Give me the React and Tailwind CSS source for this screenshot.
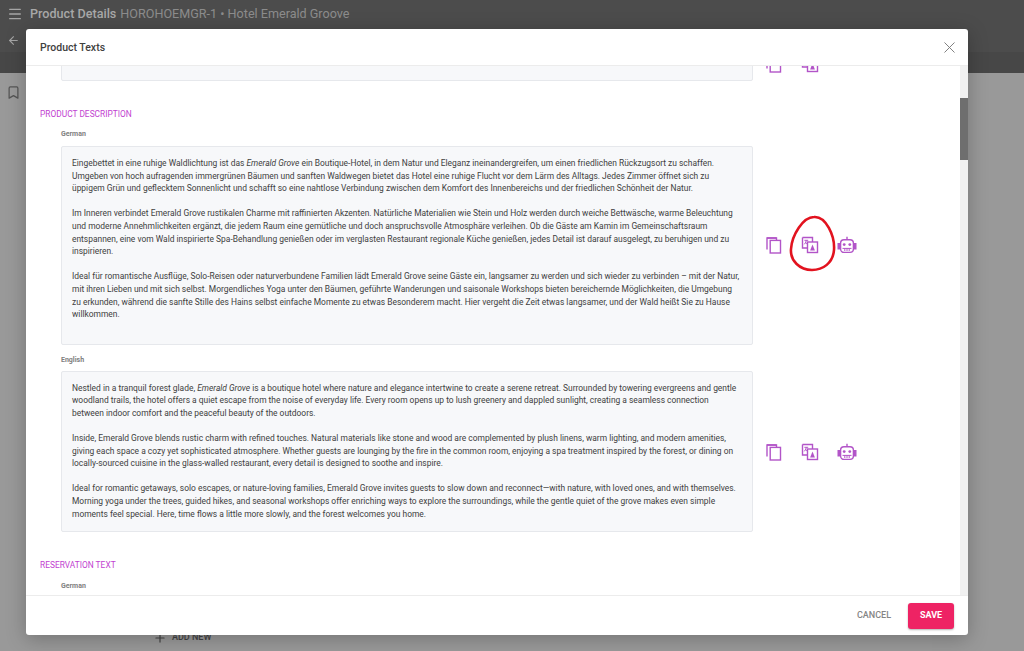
import { Menu, ArrowLeft, Bookmark, Plus, X } from "lucide-react";

const germanOne = [
  [
    [
      "Eingebettet in eine ruhige Waldlichtung ist das ",
      <em key="e">Emerald Grove</em>,
      " ein Boutique-Hotel, in dem Natur und Eleganz ineinandergreifen, um einen friedlichen Rückzugsort zu schaffen.",
    ],
    "Umgeben von hoch aufragenden immergrünen Bäumen und sanften Waldwegen bietet das Hotel eine ruhige Flucht vor dem Lärm des Alltags. Jedes Zimmer öffnet sich zu",
    "üppigem Grün und geflecktem Sonnenlicht und schafft so eine nahtlose Verbindung zwischen dem Komfort des Innenbereichs und der friedlichen Schönheit der Natur.",
  ],
  [
    "Im Inneren verbindet Emerald Grove rustikalen Charme mit raffinierten Akzenten. Natürliche Materialien wie Stein und Holz werden durch weiche Bettwäsche, warme Beleuchtung",
    "und moderne Annehmlichkeiten ergänzt, die jedem Raum eine gemütliche und doch anspruchsvolle Atmosphäre verleihen. Ob die Gäste am Kamin im Gemeinschaftsraum",
    "entspannen, eine vom Wald inspirierte Spa-Behandlung genießen oder im verglasten Restaurant regionale Küche genießen, jedes Detail ist darauf ausgelegt, zu beruhigen und zu",
    "inspirieren.",
  ],
  [
    "Ideal für romantische Ausflüge, Solo-Reisen oder naturverbundene Familien lädt Emerald Grove seine Gäste ein, langsamer zu werden und sich wieder zu verbinden – mit der Natur,",
    "mit ihren Lieben und mit sich selbst. Morgendliches Yoga unter den Bäumen, geführte Wanderungen und saisonale Workshops bieten bereichernde Möglichkeiten, die Umgebung",
    "zu erkunden, während die sanfte Stille des Hains selbst einfache Momente zu etwas Besonderem macht. Hier vergeht die Zeit etwas langsamer, und der Wald heißt Sie zu Hause",
    "willkommen.",
  ],
];

const englishOne = [
  [
    [
      "Nestled in a tranquil forest glade, ",
      <em key="e">Emerald Grove</em>,
      " is a boutique hotel where nature and elegance intertwine to create a serene retreat. Surrounded by towering evergreens and gentle",
    ],
    "woodland trails, the hotel offers a quiet escape from the noise of everyday life. Every room opens up to lush greenery and dappled sunlight, creating a seamless connection",
    "between indoor comfort and the peaceful beauty of the outdoors.",
  ],
  [
    "Inside, Emerald Grove blends rustic charm with refined touches. Natural materials like stone and wood are complemented by plush linens, warm lighting, and modern amenities,",
    "giving each space a cozy yet sophisticated atmosphere. Whether guests are lounging by the fire in the common room, enjoying a spa treatment inspired by the forest, or dining on",
    "locally-sourced cuisine in the glass-walled restaurant, every detail is designed to soothe and inspire.",
  ],
  [
    "Ideal for romantic getaways, solo escapes, or nature-loving families, Emerald Grove invites guests to slow down and reconnect—with nature, with loved ones, and with themselves.",
    "Morning yoga under the trees, guided hikes, and seasonal workshops offer enriching ways to explore the surroundings, while the gentle quiet of the grove makes even simple",
    "moments feel special. Here, time flows a little more slowly, and the forest welcomes you home.",
  ],
];

function CopyIcon() {
  return (
    <svg width="18" height="18" viewBox="0 0 18 18" fill="none" stroke="#b254c8" strokeWidth="1.4" className="shrink-0">
      <path d="M11.5 2H2v11.5" />
      <path d="M2 2h9.5v2" />
      <rect x="5.2" y="4.4" width="10.3" height="12.6" fill="white" />
    </svg>
  );
}

function TranslateIcon() {
  return (
    <svg width="18" height="18" viewBox="0 0 18 18" fill="none" stroke="#b254c8" strokeWidth="1.4" className="shrink-0">
      <path d="M1.5 1.5h10v4.5M6 12H1.5V1.5" />
      <path d="M3.4 4.3h3.8M5.3 4.3c-.2 1.8-.9 3-2 4M4.4 6.2c.5 1 1.1 1.6 2 2" strokeWidth="1" />
      <rect x="6.5" y="6" width="10" height="10.5" fill="white" />
      <path d="M11.5 8.4l-2.4 6h4.8z" fill="#b254c8" stroke="none" />
    </svg>
  );
}

function RobotIcon() {
  return (
    <svg width="20" height="18" viewBox="0 0 20 18" fill="none" stroke="#b254c8" strokeWidth="1.4" className="shrink-0">
      <path d="M10 .8v3" />
      <rect x="3.6" y="3.8" width="12.8" height="12.6" rx="3.4" />
      <path d="M3.6 7.6H1.2v5.2h2.4M16.4 7.6h2.4v5.2h-2.4" fill="#b254c8" />
      <circle cx="7.2" cy="8.6" r="1.4" fill="#b254c8" stroke="none" />
      <circle cx="12.8" cy="8.6" r="1.4" fill="#b254c8" stroke="none" />
      <path d="M5.5 12.4h9M7.8 12.4v2.6M10 12.4v2.6M12.2 12.4v2.6" strokeWidth="1" />
    </svg>
  );
}

function Icons({ circled, noRobot, className }) {
  return (
    <div className={`relative ml-[12px] flex items-center gap-[18px] ${className}`}>
      <CopyIcon />
      <TranslateIcon />
      {!noRobot && <RobotIcon />}
      {circled && (
        <svg width="48" height="58" viewBox="0 0 48 58" fill="none" className="absolute left-[24px] top-[-21px]">
          <path
            d="M25 2C14 2 3 20 2 34c-1 12 9 21 21 21 11 0 21-7 22-20C46 21 37 1 25 2z"
            stroke="#e2131f"
            strokeWidth="2.6"
          />
        </svg>
      )}
    </div>
  );
}

function TextBox({ paragraphs, className }) {
  return (
    <div className={`w-[692px] shrink-0 rounded-[2px] border border-[#e6e8ec] bg-[#f7f8fa] px-[10px] pt-[10px] text-[8.44px] leading-[12.6px] text-[#404040] ${className}`}>
      <div className="flex flex-col gap-[12.6px]">
        {paragraphs.map((lines, i) => (
          <div key={i}>
            {lines.map((line, j) => (
              <div key={j} className="whitespace-nowrap">{line}</div>
            ))}
          </div>
        ))}
      </div>
    </div>
  );
}

function LangLabel({ children, className }) {
  return <div className={`pl-[21px] text-[7px] leading-[10px] font-bold text-[#808080] ${className}`}>{children}</div>;
}

function SectionTitle({ children, className }) {
  return <div className={`text-[8.4px] leading-[12px] text-[#c23fd1] ${className}`}>{children}</div>;
}

export default function App() {
  return (
    <div className="relative h-[651px] w-[1024px] overflow-hidden bg-[#999999] font-['Roboto',sans-serif]">
      {/* page behind the dialog */}
      <div className="h-[52px] bg-[#4c4c4c] px-[7px]">
        <div className="flex h-[28px] items-center gap-[7px] text-[12.6px] font-medium">
          <Menu size={16} className="text-[#a5a5a5]" />
          <span className="text-[#a8a8a8]">Product Details</span>
          <span className="ml-[-3px] font-normal text-[#8c8c8c]">HOROHOEMGR-1 • Hotel Emerald Groove</span>
        </div>
        <ArrowLeft size={13} className="mt-[6px] text-[#a5a5a5]" />
      </div>
      <div className="h-[21px] bg-[#474747]" />
      <div className="flex h-[578px]">
        <div className="w-[27px] bg-[#999999] pl-[6px] pt-[12px]">
          <Bookmark size={15} className="text-[#555555]" />
        </div>
        <div className="ml-[113px] flex w-[792px] flex-col justify-end bg-[#9a9a9a] pb-[6px] pl-[13px]">
          <div className="flex items-center gap-[5px] text-[9px] font-medium text-[#444444]">
            <Plus size={14} />
            ADD NEW
          </div>
        </div>
      </div>

      {/* dialog */}
      <div className="absolute left-[26px] top-[29px] flex h-[606px] w-[942px] flex-col rounded-[3px] bg-white shadow-[0_4px_20px_rgba(0,0,0,0.25)]">
        <div className="flex h-[37px] shrink-0 items-center justify-between border-b border-[#ececec] pl-[14px] pr-[9px]">
          <span className="pt-[2px] text-[10.5px] font-medium text-[#3f3f3f]">Product Texts</span>
          <X size={19} strokeWidth={1.2} className="text-[#7a7a7a]" />
        </div>

        <div className="flex h-[529px] shrink-0">
          <div className="h-full flex-1 overflow-hidden pl-[14px]">
            <div className="mt-[-19px] flex h-[34px] items-center pl-[21px]">
              <div className="h-full w-[692px] shrink-0 rounded-[2px] border border-[#e6e8ec] bg-[#f7f8fa]" />
              <Icons noRobot />
            </div>

            <SectionTitle className="mt-[27px]">PRODUCT DESCRIPTION</SectionTitle>
            <LangLabel className="mt-[9px]">German</LangLabel>
            <div className="mt-[7px] flex items-center pl-[21px]">
              <TextBox paragraphs={germanOne} className="pb-[23px]" />
              <Icons circled />
            </div>

            <LangLabel className="mt-[10px]">English</LangLabel>
            <div className="mt-[6px] flex items-center pl-[21px]">
              <TextBox paragraphs={englishOne} className="pb-[11px]" />
              <Icons className="mt-[2px]" />
            </div>

            <SectionTitle className="mt-[27px]">RESERVATION TEXT</SectionTitle>
            <LangLabel className="mt-[10px]">German</LangLabel>
          </div>
          <div className="h-full w-[8px] shrink-0 bg-[#f1f1f1] pt-[32px]">
            <div className="h-[62px] bg-[#6e6e6e]" />
          </div>
        </div>

        <div className="flex flex-1 items-center justify-end gap-[17px] border-t border-[#ececec] pr-[14px]">
          <span className="text-[9px] font-medium text-[#858585]">CANCEL</span>
          <button className="h-[26px] w-[46px] rounded-[3px] bg-[#ee2364] text-[9px] font-bold text-white shadow-[0_1px_2px_rgba(0,0,0,0.3)]">
            SAVE
          </button>
        </div>
      </div>
    </div>
  );
}
